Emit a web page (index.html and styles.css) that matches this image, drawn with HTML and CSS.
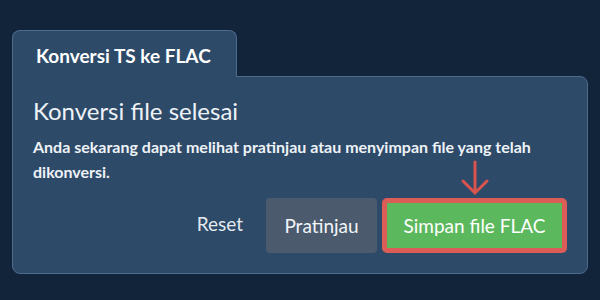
FILE: index.html
```html
<!DOCTYPE html>
<html lang="id">
<head>
<meta charset="utf-8">
<link rel="stylesheet" href="styles.css">
</head>
<body>
<div class="widget">
  <div class="tab">Konversi TS ke FLAC</div>
  <div class="panel">
    <h2 class="title">Konversi file selesai</h2>
    <p class="desc">Anda sekarang dapat melihat pratinjau atau menyimpan file yang telah dikonversi.</p>
    <div class="actions">
      <button class="btn btn-link">Reset</button>
      <button class="btn btn-gray">Pratinjau</button>
      <div class="highlight">
        <svg class="arrow" width="30" height="36" viewBox="0 0 30 36"><path d="M15 2 V33 M3 21 L15 33 L27 21" fill="none" stroke="#d9534f" stroke-width="3" stroke-linecap="round" stroke-linejoin="miter"/></svg>
        <button class="btn btn-green">Simpan file FLAC</button>
      </div>
    </div>
  </div>
</div>
</body>
</html>
```

FILE: styles.css
```css
html, body {
  margin: 0;
  padding: 0;
  background: #12243a;
  width: 600px;
  height: 300px;
  overflow: hidden;
}
body {
  font-family: Lato, "Open Sans", sans-serif;
  color: #eef2f6;
}
.widget {
  padding: 30px 12px 0 12px;
}
.tab {
  display: inline-block;
  box-sizing: border-box;
  width: 225px;
  height: 47px;
  padding: 13px 0 0 23px;
  font-size: 19px;
  font-weight: 700;
  color: #ffffff;
  background: #2d4a69;
  border: 1px solid #4d6a8c;
  border-bottom: none;
  border-radius: 8px 8px 0 0;
  margin-bottom: -1px;
  position: relative;
  z-index: 1;
  vertical-align: top;
}
.panel {
  background: #2d4a69;
  border: 1px solid #4d6a8c;
  border-radius: 0 8px 8px 8px;
  padding: 20px 20px 20px 20px;
}
.title {
  margin: 0;
  font-size: 24px;
  font-weight: 400;
  line-height: 1.2;
  color: #eef2f6;
}
.desc {
  margin: 8px 0 0 0;
  font-size: 16px;
  font-weight: 700;
  line-height: 25px;
  color: #eef2f6;
}
.actions {
  display: flex;
  justify-content: flex-end;
  align-items: stretch;
  gap: 5px;
  margin-top: 14px;
  height: 55px;
}
.btn {
  font-family: Lato, "Open Sans", sans-serif;
  font-size: 19px;
  font-weight: 400;
  border: none;
  border-radius: 4px;
  padding: 0 18px;
  color: #f2f5f8;
  cursor: pointer;
}
.btn-link {
  background: transparent;
  color: #e3e9ef;
  padding: 0 18px 4px 18px;
}
.btn-gray {
  background: #4b5b6d;
  width: 111px;
  padding: 0;
}
.highlight {
  position: relative;
  display: flex;
}
.btn-green {
  background: #5cb85c;
  border: 5px solid #dc5d58;
  border-radius: 5px;
  width: 185px;
  padding: 0;
  color: #ffffff;
}
.arrow {
  position: absolute;
  left: 78px;
  top: -38px;
}
```
